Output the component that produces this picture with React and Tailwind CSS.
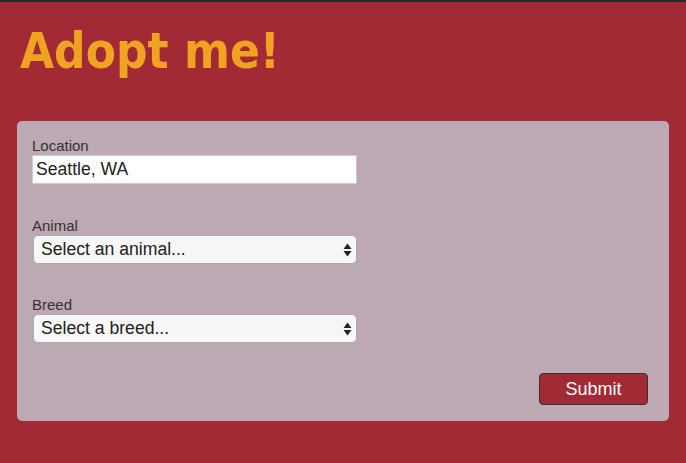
import { useState } from 'react'

const ARROWS = (
  <svg width="9" height="15" viewBox="0 0 9 15" className="absolute right-[4px] top-1/2 -translate-y-1/2">
    <path d="M4.5 1 L8.5 6.5 H0.5 Z" fill="#222" />
    <path d="M4.5 14 L8.5 8.5 H0.5 Z" fill="#222" />
  </svg>
)

function Field({ label, children }) {
  return (
    <label className="flex flex-col">
      <span className="text-[15px] leading-[18px] text-[#333]">{label}</span>
      {children}
    </label>
  )
}

function FakeSelect({ value }) {
  return (
    <div className="relative ml-[1px] w-[324px] h-[29px] rounded-[5px] border border-[#aaa] bg-[#f7f7f7] flex items-center pl-[7px] text-[17.6px] text-[#222]">
      {value}
      {ARROWS}
    </div>
  )
}

export default function App() {
  const [location, setLocation] = useState('Seattle, WA')

  return (
    <div className="w-[686px] h-[463px] bg-[#a22a35] border-t-[2px] border-[#2a2a2a] overflow-hidden" style={{ fontFamily: '"Liberation Sans", Arial, sans-serif' }}>
      <h1 className="pl-[20px] pt-[21px] text-[49px] leading-[58px] font-bold text-[#f0a323]" style={{ fontFamily: '"DejaVu Sans Condensed", "DejaVu Sans", Verdana, sans-serif' }}>
        Adopt me!
      </h1>
      <form className="mx-[17px] mt-[40px] h-[300px] rounded-[5px] bg-[#bca9b3] pl-[15px] pr-[21px] pt-[16px] flex flex-col" onSubmit={e => e.preventDefault()}>
        <Field label="Location">
          <input
            value={location}
            onChange={e => setLocation(e.target.value)}
            className="w-[325px] h-[29px] border border-[#ccc] bg-white px-[3px] text-[17.6px] text-[#222] outline-none"
          />
        </Field>
        <div className="mt-[33px]">
          <Field label="Animal">
            <FakeSelect value="Select an animal..." />
          </Field>
        </div>
        <div className="mt-[32px]">
          <Field label="Breed">
            <FakeSelect value="Select a breed..." />
          </Field>
        </div>
        <div className="flex justify-end mt-[30px]">
          <button type="submit" className="w-[109px] h-[32px] rounded-[4px] border border-[#333] bg-[#a22a35] text-white text-[18px]">
            Submit
          </button>
        </div>
      </form>
    </div>
  )
}
